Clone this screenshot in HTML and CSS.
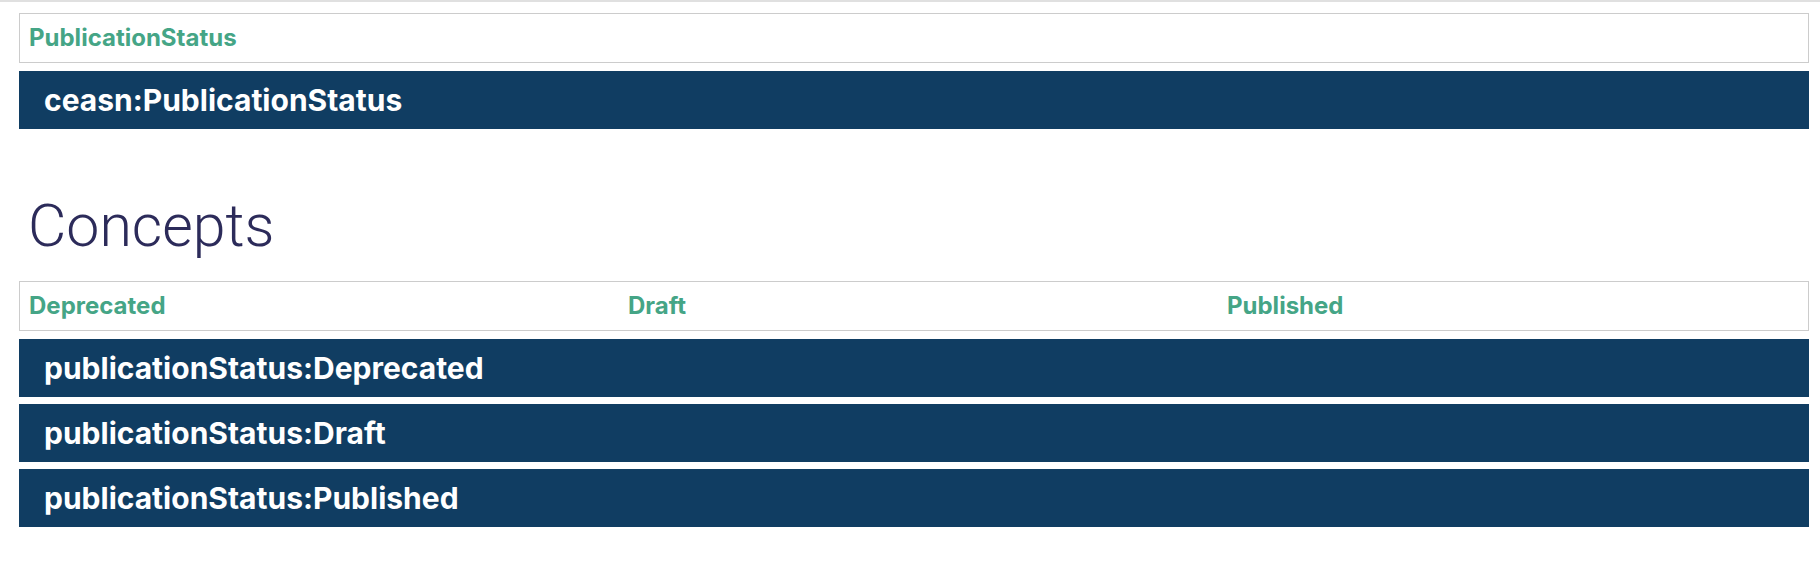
FILE: index.html
```html
<!DOCTYPE html>
<html lang="en">
<head>
<meta charset="utf-8">
<title>PublicationStatus</title>
<link rel="stylesheet" href="styles.css">
</head>
<body>
<div class="topline"></div>
<main class="page">
  <div class="label-box">
    <span class="label">PublicationStatus</span>
  </div>
  <div class="bar">ceasn:PublicationStatus</div>

  <h2 class="section-title">Concepts</h2>

  <div class="label-box cols">
    <span class="label">Deprecated</span>
    <span class="label">Draft</span>
    <span class="label">Published</span>
  </div>
  <div class="bar">publicationStatus:Deprecated</div>
  <div class="bar">publicationStatus:Draft</div>
  <div class="bar">publicationStatus:Published</div>
</main>
</body>
</html>
```

FILE: styles.css
```css
html, body {
  margin: 0;
  padding: 0;
  background: #ffffff;
}

.topline {
  height: 2px;
  background: #e0e0e0;
}

.page {
  padding: 11px 11px 0 19px;
  display: flex;
  flex-direction: column;
}

.label-box {
  box-sizing: border-box;
  height: 50px;
  border: 1px solid #cccccc;
  display: flex;
  align-items: center;
  padding-left: 9px;
}

.label-box.cols {
  display: grid;
  grid-template-columns: 599px 599px 1fr;
  align-items: center;
}

.label {
  font-family: "Inter", "Noto Sans", sans-serif;
  font-weight: 700;
  font-size: 24px;
  color: #45a586;
  line-height: 1;
  font-variant-ligatures: none;
}

.bar {
  box-sizing: border-box;
  height: 58px;
  margin-top: 8px;
  background: #103d62;
  color: #ffffff;
  display: flex;
  align-items: center;
  padding-left: 25px;
  font-family: "Inter", "Noto Sans", sans-serif;
  font-weight: 700;
  font-size: 30px;
  line-height: 1;
  font-variant-ligatures: none;
}

.bar + .bar {
  margin-top: 7px;
}

.section-title {
  margin: 62px 0 20px 9px;
  font-family: "Roboto", "Noto Sans", sans-serif;
  font-weight: 300;
  font-size: 59px;
  line-height: 70px;
  color: #2c2b5a;
}
```
